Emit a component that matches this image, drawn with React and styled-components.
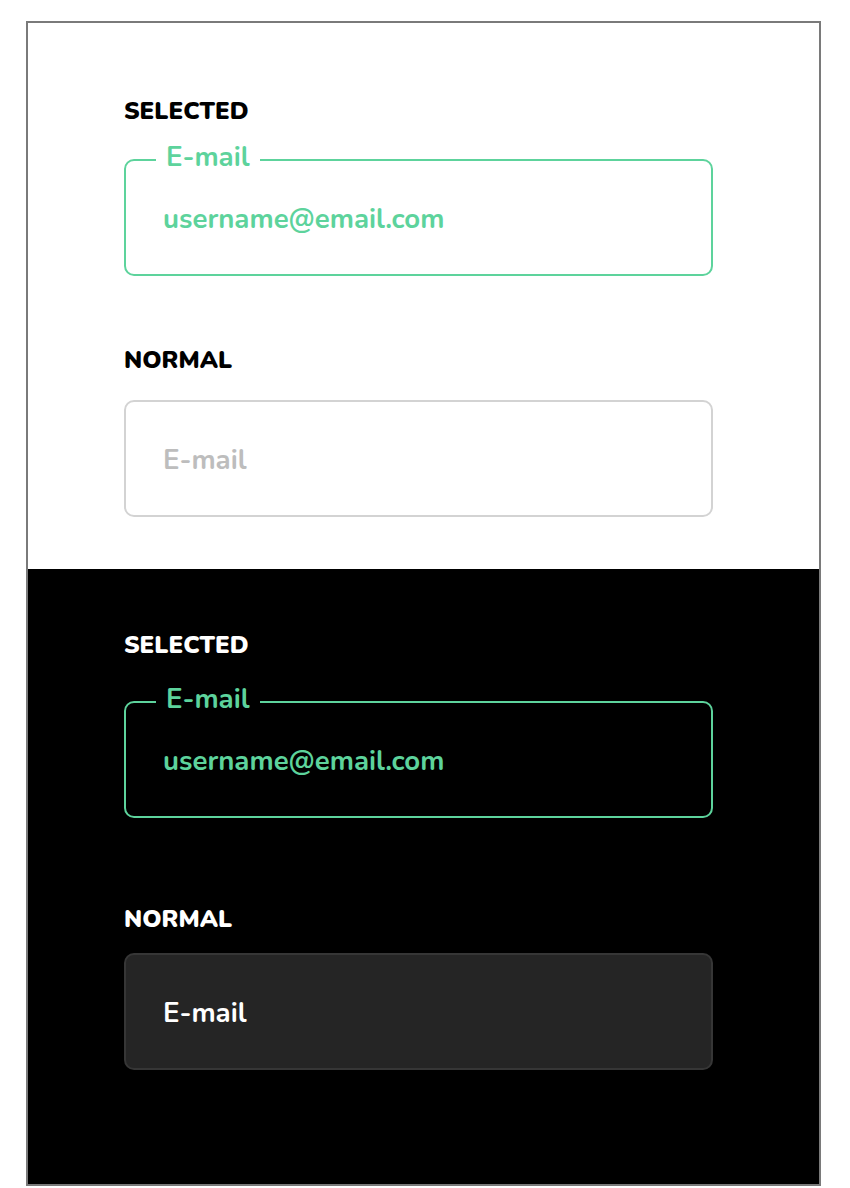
import React from 'react';
import styled, { createGlobalStyle } from 'styled-components';

const GlobalStyle = createGlobalStyle`
  body {
    margin: 0;
    background: #ffffff;
    font-family: "Nunito", "Lato", "Noto Sans", sans-serif;
  }
`;

const Page = styled.div`
  padding: 21px 0 0 26px;
`;

const Frame = styled.div`
  box-sizing: border-box;
  width: 795px;
  border: 2px solid #7a7a7a;
  display: flex;
  flex-direction: column;
`;

const Section = styled.section`
  background: ${(p) => (p.dark ? '#000000' : '#ffffff')};
  padding: ${(p) => p.pad};
  padding-left: 96px;
  display: flex;
  flex-direction: column;
`;

const Label = styled.div`
  font-size: 24px;
  line-height: 24px;
  font-weight: 900;
  color: ${(p) => (p.dark ? '#ffffff' : '#000000')};
  margin-top: ${(p) => p.top || 0}px;
  margin-bottom: ${(p) => p.bottom}px;
`;

const Field = styled.div`
  position: relative;
  box-sizing: border-box;
  width: 589px;
  height: 117px;
  border-radius: 10px;
  border: 2px solid ${(p) => p.border};
  background: ${(p) => p.bg || 'transparent'};
  display: flex;
  align-items: center;
  padding: 3px 0 0 37px;
  font-size: 27.6px;
  font-weight: 700;
  color: ${(p) => p.color};
`;

const FloatLabel = styled.span`
  position: absolute;
  left: 30px;
  top: -19px;
  padding: 0 10px;
  line-height: 30px;
  font-size: 27.6px;
  font-weight: 700;
  color: #5dd39c;
  background: ${(p) => (p.dark ? '#000000' : '#ffffff')};
`;

const GREEN = '#5dd39c';

export default function App() {
  return (
    <>
      <GlobalStyle />
      <Page>
        <Frame>
          <Section pad="76px 0 52px">
            <Label bottom={36}>SELECTED</Label>
            <Field border={GREEN} color={GREEN}>
              <FloatLabel>E-mail</FloatLabel>
              username@email.com
            </Field>
            <Label top={72} bottom={28}>NORMAL</Label>
            <Field border="#d3d3d3" color="#bdbdbd">
              E-mail
            </Field>
          </Section>
          <Section dark pad="64px 0 114px">
            <Label dark bottom={44}>SELECTED</Label>
            <Field border={GREEN} color={GREEN}>
              <FloatLabel dark>E-mail</FloatLabel>
              username@email.com
            </Field>
            <Label dark top={89} bottom={22}>NORMAL</Label>
            <Field border="#363636" bg="#252525" color="#ffffff">
              E-mail
            </Field>
          </Section>
        </Frame>
      </Page>
    </>
  );
}
